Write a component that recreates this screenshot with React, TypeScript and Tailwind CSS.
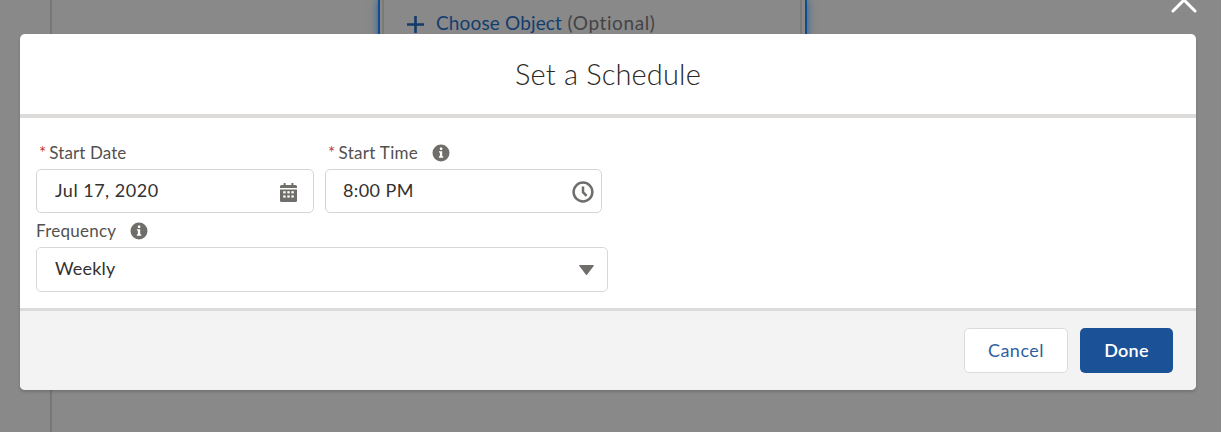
import React from "react";

function InfoIcon() {
  return (
    <svg width="18" height="18" viewBox="0 0 18 18" className="block">
      <circle cx="9" cy="9" r="8.5" fill="#706e6b" />
      <rect x="7.9" y="3.6" width="2.4" height="2.3" rx="0.6" fill="#fff" />
      <path d="M6.9 7.2h3.3v5.1h1v1.4H6.9v-1.4h1v-3.7h-1z" fill="#fff" />
    </svg>
  );
}

function CalendarIcon() {
  return (
    <svg width="17" height="19" viewBox="0 0 17 19" className="mt-[2px] block">
      <rect x="3.6" y="0" width="2" height="3" rx="0.5" fill="#706e6b" />
      <rect x="11.4" y="0" width="2" height="3" rx="0.5" fill="#706e6b" />
      <path d="M1.5 2h14A1.5 1.5 0 0 1 17 3.5V5H0V3.5A1.5 1.5 0 0 1 1.5 2z" fill="#706e6b" />
      <path d="M0 6.4h17v11.1a1.5 1.5 0 0 1-1.5 1.5h-14A1.5 1.5 0 0 1 0 17.5z" fill="#706e6b" />
      <g fill="#fff">
        <rect x="3.2" y="8.2" width="2.4" height="2.2" />
        <rect x="7.3" y="8.2" width="2.4" height="2.2" />
        <rect x="11.4" y="8.2" width="2.4" height="2.2" />
        <rect x="3.2" y="12.4" width="2.4" height="2.2" />
        <rect x="7.3" y="12.4" width="2.4" height="2.2" />
        <rect x="11.4" y="12.4" width="2.4" height="2.2" />
      </g>
    </svg>
  );
}

function ClockIcon() {
  return (
    <svg width="22" height="22" viewBox="0 0 22 22" className="mt-[2px] block">
      <circle cx="11" cy="11" r="9.4" fill="none" stroke="#706e6b" strokeWidth="2.5" />
      <path d="M11 5.5v5.7l3.6 3.6" fill="none" stroke="#706e6b" strokeWidth="2.5" />
    </svg>
  );
}

function Req() {
  return <span className="mr-[3px] text-[#c23934]">*</span>;
}

export default function App() {
  return (
    <div className="relative h-[432px] w-[1221px] overflow-hidden bg-[#898989] font-['Lato','Open_Sans',sans-serif]">
      <div className="ml-[50px] flex h-full border-l-2 border-[#777777] pl-[326px]">
        <div className="h-[40px] w-[429px] border-x-2 border-[#0f4c8a] pl-[2px] pr-[3px] shadow-[0_0_8px_#1f5fa0]">
          <div className="flex h-full items-start gap-[12px] border-x-2 border-[#7a7a7a] bg-[#898989] pl-[23px] pt-[11px] text-[19px] leading-[24px]">
            <svg width="17" height="17" viewBox="0 0 17 17" className="mt-[5px] shrink-0">
              <path d="M8.5 0v17M0 8.5h17" stroke="#123a6b" strokeWidth="2.6" />
            </svg>
            <div className="whitespace-nowrap">
              <span className="tracking-[0.15px] text-[#143d6e]">Choose Object</span>
              <span className="tracking-[0.6px] text-[#444444]"> (Optional)</span>
            </div>
          </div>
        </div>
      </div>

      <svg width="28" height="28" viewBox="0 0 28 28" className="absolute left-[1170px] top-[-14px]">
        <path d="M3 3l22 22M25 3L3 25" stroke="#fff" strokeWidth="3" strokeLinecap="round" />
      </svg>

      <div className="absolute left-[20px] top-[34px] flex h-[356px] w-[1176px] flex-col overflow-hidden rounded-[5px] bg-white shadow-[0_2px_3px_rgba(0,0,0,0.16)]">
        <header className="flex h-[84px] shrink-0 items-center justify-center border-b-4 border-[#dddbda] text-[29px] font-light leading-[36px] tracking-[0.15px] text-[#2b2826]">
          Set a Schedule
        </header>

        <div className="flex flex-1 flex-col px-[16px] pt-[25px] text-[#3e3e3c]">
          <div className="flex gap-[11px]">
            <div className="w-[278px]">
              <div className="flex h-[20px] items-center pl-[3px] text-[17px] leading-[20px] tracking-[0.1px] text-[#54514f]">
                <Req />
                Start Date
              </div>
              <div className="mt-[6px] flex h-[44px] items-center justify-between rounded-[5px] border border-[#d4d4d4] pl-[18px] pr-[16px] text-[18px] tracking-[0.5px] text-[#333130]">
                <span className="pb-[2px]">Jul 17, 2020</span>
                <CalendarIcon />
              </div>
            </div>
            <div className="w-[277px]">
              <div className="flex h-[20px] items-center pl-[3px] text-[17px] leading-[20px] tracking-[0.3px] text-[#54514f]">
                <Req />
                Start Time
                <span className="ml-[14px]">
                  <InfoIcon />
                </span>
              </div>
              <div className="mt-[6px] flex h-[44px] items-center justify-between rounded-[5px] border border-[#d4d4d4] pl-[17px] pr-[7px] text-[18px] tracking-[0.4px] text-[#333130]">
                <span className="pb-[2px]">8:00 PM</span>
                <ClockIcon />
              </div>
            </div>
          </div>

          <div className="mt-[8px] w-[572px]">
            <div className="flex h-[20px] items-center text-[17px] leading-[20px] tracking-[0.25px] text-[#54514f]">
              Frequency
              <span className="ml-[14px]">
                <InfoIcon />
              </span>
            </div>
            <div className="mt-[6px] flex h-[45px] items-center justify-between rounded-[5px] border border-[#d8d8d8] pl-[18px] pr-[13px] text-[18px] tracking-[0.2px] text-[#333130]">
              <span className="pb-[2px]">Weekly</span>
              <svg width="15" height="10" viewBox="0 0 15 10" className="mt-[1px] block">
                <path d="M.8 0h13.4a.6.6 0 0 1 .5 1L8 9.7a.6.6 0 0 1-1 0L.3 1A.6.6 0 0 1 .8 0z" fill="#706e6b" />
              </svg>
            </div>
          </div>
        </div>

        <footer className="flex h-[82px] shrink-0 items-start justify-end gap-[12px] border-t-[3px] border-[#dbdbdb] bg-[#f3f3f3] pr-[23px] pt-[17px] text-[18px]">
          <button className="flex h-[45px] w-[104px] items-center justify-center rounded-[5px] border border-[#dddbda] bg-white tracking-[0.5px] text-[#2f5f9e]">
            Cancel
          </button>
          <button className="flex h-[45px] w-[93px] items-center justify-center rounded-[5px] bg-[#1b5297] font-semibold tracking-[0.2px] text-white">
            Done
          </button>
        </footer>
      </div>
    </div>
  );
}
